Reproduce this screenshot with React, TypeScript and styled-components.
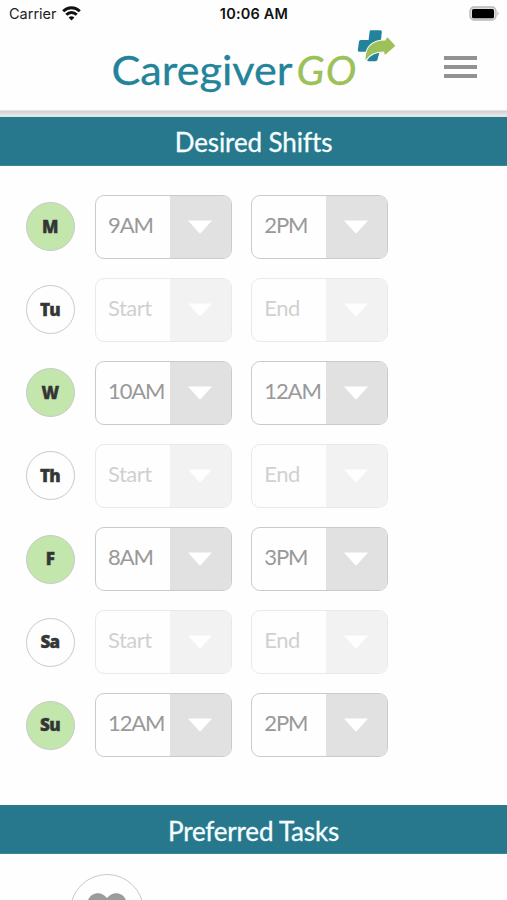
import React from "react";
import styled, { createGlobalStyle } from "styled-components";

const Global = createGlobalStyle`
  *, *::before, *::after { box-sizing: border-box; }
  html, body { margin: 0; padding: 0; background: #fefefe; }
`;

const Screen = styled.div`
  width: 507px;
  height: 900px;
  overflow: hidden;
  display: flex;
  flex-direction: column;
  background: #fefefe;
  font-family: Lato, "Open Sans", sans-serif;
`;

const StatusBar = styled.div`
  height: 27px;
  flex: none;
  display: grid;
  grid-template-columns: 1fr auto 1fr;
  align-items: center;
  padding: 0 7px 0 9px;
  font-family: Inter, sans-serif;
  font-size: 14.5px;
  line-height: 27px;
  color: #222;
`;

const Carrier = styled.div`
  display: flex;
  align-items: center;
  gap: 5px;
`;

const Clock = styled.div`
  font-weight: 600;
  color: #111;
  letter-spacing: 0.2px;
  margin-left: -1px;
`;

const Battery = styled.svg`
  justify-self: end;
  display: block;
`;

const Header = styled.header`
  height: 83px;
  flex: none;
  display: flex;
  justify-content: space-between;
  padding: 0 30px 0 110px;
`;

const Logo = styled.svg`
  display: block;
  font-family: Lato, sans-serif;
`;

const MenuButton = styled.button`
  width: 33px;
  height: 22px;
  margin-top: 29px;
  padding: 0;
  border: 0;
  background: none;
  display: flex;
  flex-direction: column;
  justify-content: space-between;
`;

const MenuLine = styled.span`
  display: block;
  height: 4px;
  width: 33px;
  background: #929292;
`;

const Shadow = styled.div`
  flex: none;
  height: 7px;
  background: linear-gradient(#ececec 0, #d3d3d3 1.5px, #dadada 3px, #e6e6e6 5px, #d9e4e6 7px);
`;

const Banner = styled.h2<{ $tracking: number; $drop: number }>`
  flex: none;
  margin: 0;
  height: 49px;
  padding-top: ${(p) => p.$drop}px;
  text-align: center;
  background: #28788d;
  color: #f5feff;
  font-size: 26px;
  font-weight: 400;
  line-height: 48px;
  letter-spacing: ${(p) => p.$tracking}px;
  -webkit-text-stroke: 0.3px #f5feff;
  border-bottom: 1px solid #3d889a;
`;

const Shifts = styled.div`
  flex: none;
  height: 639.4px;
  padding: 28.6px 0 0 26px;
`;

const ShiftRow = styled.div`
  height: 83.1px;
  display: flex;
  align-items: flex-start;
`;

const Day = styled.div<{ $on: boolean }>`
  width: 49px;
  height: 49px;
  margin: 7.6px 20px 0 0;
  padding: 0 1px 1px 0;
  border-radius: 50%;
  border: 1.5px solid #c9c9c9;
  background: ${(p) => (p.$on ? "#c3e6ac" : "#fefefe")};
  color: #343635;
  display: flex;
  align-items: center;
  justify-content: center;
  font-family: "Open Sans", sans-serif;
  font-size: 17px;
  font-weight: 800;
  letter-spacing: -0.6px;
  -webkit-text-stroke: 0.4px #343635;
`;

const Picker = styled.div<{ $off: boolean }>`
  width: 137px;
  height: 64px;
  margin-right: 19.3px;
  display: flex;
  overflow: hidden;
  border: 1.5px solid #cbcbcb;
  border-radius: 9px;
  opacity: ${(p) => (p.$off ? 0.4 : 1)};
`;

const Value = styled.div<{ $hint: boolean }>`
  width: 73.5px;
  padding: 0 0 2px 12px;
  line-height: 57px;
  font-size: 22px;
  white-space: nowrap;
  letter-spacing: ${(p) => (p.$hint ? -0.5 : -1.1)}px;
  color: ${(p) => (p.$hint ? "#8d8d8d" : "#999")};
`;

const Toggle = styled.div`
  flex: 1;
  display: flex;
  align-items: center;
  justify-content: center;
  padding: 0 1px 0 0;
  background: #e1e1e1;
`;

const Tasks = styled.div`
  padding: 20px 0 0 70px;
`;

const TaskIcon = styled.div`
  width: 74px;
  height: 74px;
  border: 1.5px solid #c9c9c9;
  border-radius: 50%;
  display: flex;
  align-items: center;
  justify-content: center;
`;

const days = [
  { day: "M", start: "9AM", end: "2PM" },
  { day: "Tu" },
  { day: "W", start: "10AM", end: "12AM" },
  { day: "Th" },
  { day: "F", start: "8AM", end: "3PM" },
  { day: "Sa" },
  { day: "Su", start: "12AM", end: "2PM" },
];

function TimePicker({ value, hint }: { value?: string; hint: string }) {
  return (
    <Picker $off={!value}>
      <Value $hint={!value}>{value ?? hint}</Value>
      <Toggle>
        <svg width="26" height="14" viewBox="0 0 26 14">
          <path d="M1 0.5H25L14 12.8Q13 13.8 12 12.8Z" fill="#fff" />
        </svg>
      </Toggle>
    </Picker>
  );
}

export default function App() {
  return (
    <Screen>
      <Global />
      <StatusBar>
        <Carrier>
          Carrier
          <svg width="19" height="15" viewBox="0 0 19 15" fill="none" stroke="#111" strokeWidth="2.9">
            <path d="M1.2 5.2C6 .6 13 .6 17.8 5.2" />
            <path d="M4.3 8.8C7.3 5.8 11.7 5.8 14.7 8.8" />
            <path d="M6.6 11.5Q9.5 9 12.4 11.5L9.5 14.4Z" fill="#111" stroke="none" />
          </svg>
        </Carrier>
        <Clock>10:06 AM</Clock>
        <Battery width="31" height="16" viewBox="0 0 31 16">
          <rect x="1" y="1" width="26" height="13" rx="4" fill="#dedede" stroke="#b8b8b8" strokeWidth="1.3" />
          <rect x="3" y="2.9" width="22" height="9.3" rx="1.5" fill="#000" />
          <path d="M28.5 5.2Q30.6 7.5 28.5 9.8Z" fill="#aaa" />
        </Battery>
      </StatusBar>
      <Header>
        <Logo width="288" height="83" viewBox="110 27 288 83">
          <text x="111.5" y="85" fontSize="40.5" fill="#23839a" stroke="#23839a" strokeWidth="0.3" textLength="181" lengthAdjust="spacingAndGlyphs">
            Caregiver
          </text>
          <text x="296.5 325.8" y="84.6" fontSize="41" fontStyle="italic" fill="#9bc158" stroke="#9bc158" strokeWidth="0.4">
            GO
          </text>
          <path
            d="M371 30.3H380.5Q382 30.3 381.8 31.8L381 40H387Q388.5 40 388 42L385 52.2H379.5L377.5 59.6Q377.2 61.2 375.5 61.2H368.5Q367 61.2 367.1 59.6L367.8 51.8H359.2Q357.6 51.8 357.8 50L359 41.5Q359.2 40 360.8 40H368.6L369.6 31.6Q369.8 30.3 371 30.3Z"
            fill="#23839a"
          />
          <path
            d="M365.6 60.5C365 47.5 372 40.2 385.6 40.4L386.4 38.2Q387 36.8 388.2 37.9L394.6 44.9Q395.4 45.9 394.4 46.8L386 54.1Q384.5 55.2 384.4 53.4L384.2 51.6C375 51.8 370 54 365.6 60.5Z"
            fill="#9bc158"
            stroke="#fefefe"
            strokeWidth="1.8"
            paintOrder="stroke"
          />
        </Logo>
        <MenuButton aria-label="Menu">
          <MenuLine />
          <MenuLine />
          <MenuLine />
        </MenuButton>
      </Header>
      <Shadow />
      <Banner $tracking={-0.1} $drop={1}>Desired Shifts</Banner>
      <Shifts>
        {days.map((d) => (
          <ShiftRow key={d.day}>
            <Day $on={!!d.start}>{d.day}</Day>
            <TimePicker value={d.start} hint="Start" />
            <TimePicker value={d.end} hint="End" />
          </ShiftRow>
        ))}
      </Shifts>
      <Banner $tracking={-0.2} $drop={2}>Preferred Tasks</Banner>
      <Tasks>
        <TaskIcon>
          <svg width="40" height="36" viewBox="0 0 40 36">
            <path d="M20 35L3 18C-1 13 0 5 5 2C10-1 16 0 20 5C24 0 30-1 35 2C40 5 41 13 37 18Z" fill="#9b9b9b" />
          </svg>
        </TaskIcon>
      </Tasks>
    </Screen>
  );
}
